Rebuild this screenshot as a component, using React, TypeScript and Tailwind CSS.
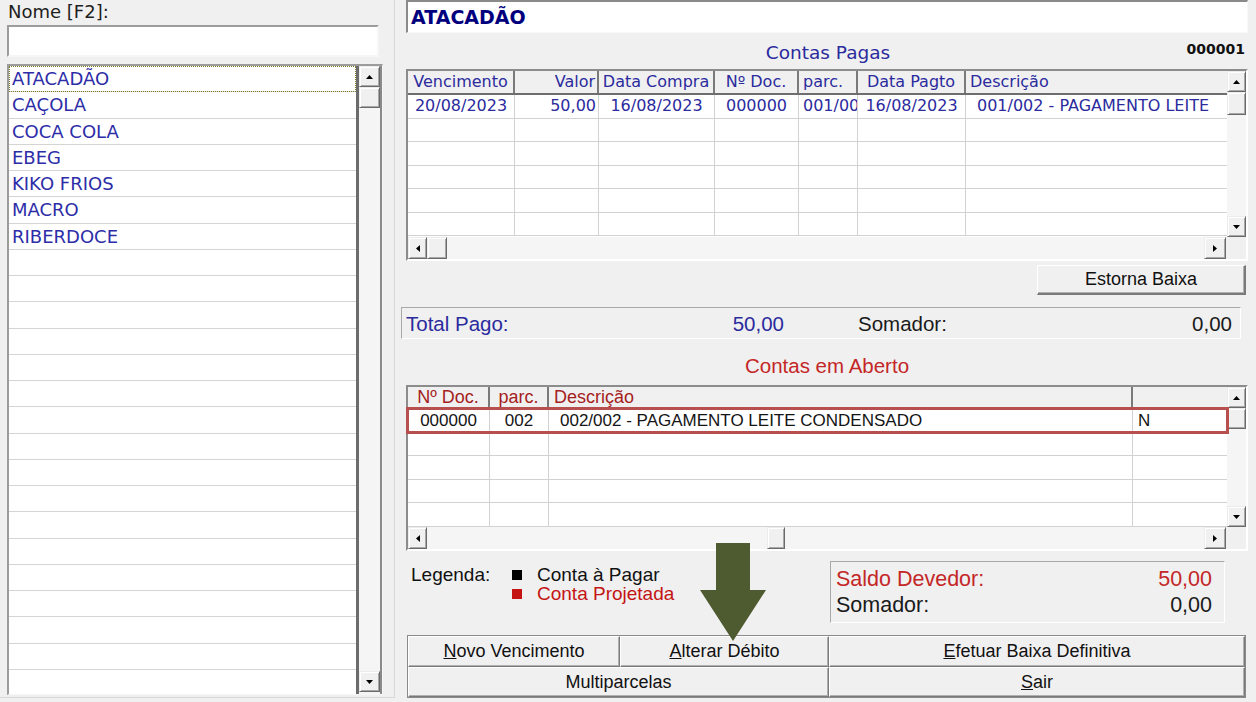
import React from "react";

const DV = "font-['DejaVu_Sans',Verdana,sans-serif]";
const LS = "font-['Liberation_Sans',Arial,sans-serif]";

function Tri({ dir }: { dir: "up" | "down" | "left" | "right" }) {
  const vert = dir === "up" || dir === "down";
  const d =
    dir === "up"
      ? "M0 4 L3.5 0 L7 4 Z"
      : dir === "down"
      ? "M0 0 L7 0 L3.5 4 Z"
      : dir === "left"
      ? "M4 0 L4 7 L0 3.5 Z"
      : "M0 0 L0 7 L4 3.5 Z";
  return (
    <svg width={vert ? 7 : 4} height={vert ? 4 : 7} viewBox={vert ? "0 0 7 4" : "0 0 4 7"}>
      <path d={d} fill="#000" />
    </svg>
  );
}

function SBtn({ className = "", children }: { className?: string; children?: React.ReactNode }) {
  return (
    <div
      className={`flex shrink-0 items-center justify-center bg-[#f0f0f0] border border-t-[#ececec] border-l-[#ececec] border-r-[#6a6a6a] border-b-[#6a6a6a] shadow-[inset_1px_1px_0_#ffffff,inset_-1px_-1px_0_#a8a8a8] ${className}`}
    >
      {children}
    </div>
  );
}

function VScroll({ thumbH, className = "" }: { thumbH: string; className?: string }) {
  return (
    <div className={`flex flex-col shrink-0 bg-[#f4f4f4] ${className}`}>
      <SBtn className="h-[21px] w-full">
        <Tri dir="up" />
      </SBtn>
      <SBtn className={`${thumbH} w-full`} />
      <div className="flex-1 bg-[#f5f5f5]" />
      <SBtn className="h-[21px] w-full">
        <Tri dir="down" />
      </SBtn>
    </div>
  );
}

function HScroll({ pre, thumbW }: { pre: string; thumbW: string }) {
  return (
    <div className="flex h-[22px] shrink-0 bg-[#f5f5f5]">
      <SBtn className="w-[19px] h-full">
        <Tri dir="left" />
      </SBtn>
      <div className={`${pre} shrink-0`} />
      <SBtn className={`${thumbW} h-full`} />
      <div className="flex-1" />
      <SBtn className="w-[22px] h-full">
        <Tri dir="right" />
      </SBtn>
      <div className="w-[20px] shrink-0 bg-[#f0f0f0]" />
    </div>
  );
}

const t1cols = ["w-[107px]", "w-[84px]", "w-[116px]", "w-[84px]", "w-[59px]", "w-[108px]", "flex-1"];

function Table1() {
  const heads: [string, string][] = [
    ["Vencimento", "justify-center"],
    ["Valor", "justify-end pr-[2px]"],
    ["Data Compra", "justify-center"],
    ["Nº Doc.", "justify-center"],
    ["parc.", "justify-start pl-[4px]"],
    ["Data Pagto", "justify-center"],
    ["Descrição", "justify-start pl-[4px]"],
  ];
  const row1: [string, string][] = [
    ["20/08/2023", "justify-center"],
    ["50,00", "justify-end pr-[2px]"],
    ["16/08/2023", "justify-center"],
    ["000000", "justify-center"],
    ["001/002", "justify-start pl-[4px]"],
    ["16/08/2023", "justify-center"],
    ["001/002 - PAGAMENTO LEITE", "justify-start pl-[11px]"],
  ];
  return (
    <div className="h-[192px] shrink-0 flex flex-col border-2 border-t-[#8c8c8c] border-l-[#8c8c8c] border-r-white border-b-white">
      <div className="flex flex-1 min-h-0">
        <div className={`flex-1 flex flex-col bg-white overflow-hidden ${DV}`}>
          <div className="flex h-[24px] shrink-0 bg-[#f0f0f0] border-b-2 border-[#6e6e6e] text-[16px] text-[#2b2b9e]">
            {heads.map(([t, a], i) => (
              <div
                key={i}
                className={`${t1cols[i]} shrink-0 flex items-center whitespace-nowrap overflow-hidden ${a} ${
                  i < 6 ? "border-r-2 border-[#7a7a7a]" : ""
                }`}
              >
                {t}
              </div>
            ))}
          </div>
          {[0, 1, 2, 3, 4, 5].map((r) => (
            <div key={r} className="flex h-[23.5px] shrink-0 border-b border-[#d2d2d2] text-[16px] text-[#2b2b9e]">
              {t1cols.map((c, i) => (
                <div
                  key={i}
                  className={`${c} shrink-0 flex items-center whitespace-nowrap overflow-hidden ${
                    r === 0 ? row1[i][1] : ""
                  } ${i < 6 ? "border-r border-[#d2d2d2]" : ""}`}
                >
                  {r === 0 ? row1[i][0] : ""}
                </div>
              ))}
            </div>
          ))}
        </div>
        <VScroll thumbH="h-[23px]" className="w-[19px]" />
      </div>
      <HScroll pre="w-0" thumbW="w-[20px]" />
    </div>
  );
}

const t2cols = ["w-[82px]", "w-[59px]", "w-[584px]", "flex-1"];

function Table2() {
  const heads: [string, string][] = [
    ["Nº Doc.", "justify-center"],
    ["parc.", "justify-center"],
    ["Descrição", "justify-start pl-[5px]"],
    ["", ""],
  ];
  const row1: [string, string][] = [
    ["000000", "justify-center"],
    ["002", "justify-center"],
    ["002/002 - PAGAMENTO LEITE CONDENSADO", "justify-start pl-[11px]"],
    ["N", "justify-start pl-[5px]"],
  ];
  return (
    <div className="relative h-[166px] shrink-0 flex flex-col border-2 border-t-[#8c8c8c] border-l-[#8c8c8c] border-r-white border-b-white">
      <div className="flex flex-1 min-h-0">
        <div className={`flex-1 flex flex-col bg-white overflow-hidden ${LS}`}>
          <div className="flex h-[22px] shrink-0 bg-[#f0f0f0] border-b-2 border-[#6e6e6e] text-[18px] text-[#a51d1d]">
            {heads.map(([t, a], i) => (
              <div
                key={i}
                className={`${t2cols[i]} shrink-0 flex items-center whitespace-nowrap overflow-hidden ${a} ${
                  i < 3 ? "border-r-2 border-[#7a7a7a]" : ""
                }`}
              >
                {t}
              </div>
            ))}
          </div>
          {[0, 1, 2, 3, 4].map((r) => (
            <div key={r} className="flex h-[23.6px] shrink-0 border-b border-[#d2d2d2] text-[17px] text-[#141414]">
              {t2cols.map((c, i) => (
                <div
                  key={i}
                  className={`${c} shrink-0 flex items-center whitespace-nowrap overflow-hidden ${
                    r === 0 ? row1[i][1] : ""
                  } ${i < 3 ? "border-r border-[#d2d2d2]" : ""}`}
                >
                  {r === 0 ? row1[i][0] : ""}
                </div>
              ))}
            </div>
          ))}
        </div>
        <VScroll thumbH="h-[21px]" className="w-[19px]" />
      </div>
      <HScroll pre="w-[340px]" thumbW="w-[18px]" />
      <div className="absolute left-[-2px] top-[20px] w-[823px] h-[27px] border-[3px] border-[#b84f4f]" />
    </div>
  );
}

function RaisedBtn({ className = "", children }: { className?: string; children?: React.ReactNode }) {
  return (
    <div
      className={`flex items-center justify-center bg-[#f0f0f0] border border-t-white border-l-white border-r-[#7a7a7a] border-b-[#7a7a7a] shadow-[inset_-1px_-1px_0_#b0b0b0] text-[18px] text-[#111] ${LS} ${className}`}
    >
      {children}
    </div>
  );
}

function LeftPanel() {
  const names = ["ATACADÃO", "CAÇOLA", "COCA COLA", "EBEG", "KIKO FRIOS", "MACRO", "RIBERDOCE"];
  const rows = Array.from({ length: 24 }, (_, i) => names[i] ?? "");
  return (
    <div className="w-[400px] shrink-0 h-full">
      <div className="w-[395px] h-[698px] border-r border-b border-[#d8d8d8] pl-[7px] pt-[1px] flex flex-col">
        <div className={`h-[24px] pl-[1px] text-[18px] leading-[22px] text-[#1e1e1e] ${DV}`}>Nome [F2]:</div>
        <div className="w-[372px] h-[32px] bg-white border-2 border-t-[#9c9c9c] border-l-[#9c9c9c] border-r-[#f6f6f6] border-b-[#f6f6f6]" />
        <div className="mt-[7px] w-[376px] h-[631px] flex border-t-2 border-l-2 border-t-[#9c9c9c] border-l-[#9c9c9c] border-r border-b border-r-[#f6f6f6] border-b-[#f6f6f6]">
          <div className={`flex-1 bg-white flex flex-col overflow-hidden ${DV}`}>
            {rows.map((n, i) => (
              <div
                key={i}
                className={`h-[26.25px] shrink-0 border-b border-[#d4d4d4] flex items-center pl-[3px] text-[18px] text-[#2d2da8] ${
                  i === 0 ? "outline-1 outline-dotted outline-[#7f7f2a] -outline-offset-1" : ""
                }`}
              >
                {n}
              </div>
            ))}
          </div>
          <div className="w-[26px] shrink-0 flex border-l-[3px] border-r-2 border-l-[#6c6c6c] border-r-[#8a8a8a] bg-[#f5f5f5] pb-[2px]">
            <VScroll thumbH="h-[21px]" className="w-full" />
          </div>
        </div>
      </div>
    </div>
  );
}

function RightPanel() {
  return (
    <div className="w-[856px] shrink-0 h-full flex flex-col pl-[6px] pr-[8px]">
      <div className="h-[33px] shrink-0 bg-white border-t-2 border-l-2 border-t-[#8a8a8a] border-l-[#8a8a8a] border-r border-b border-r-[#f8f8f8] border-b-[#f8f8f8] flex items-center pl-[3px]">
        <span className={`${DV} font-bold text-[19px] text-[#00007e]`}>ATACADÃO</span>
      </div>
      <div className="h-[36px] shrink-0 grid grid-cols-[1fr_auto_1fr] items-center">
        <div />
        <div className={`${DV} text-[18.5px] text-[#2b2b9e] pt-[3px] pl-[2px]`}>Contas Pagas</div>
        <div className={`${DV} font-bold text-[14px] text-[#111] justify-self-end pr-[3px] pb-[4px]`}>000001</div>
      </div>
      <Table1 />
      <div className="flex justify-end mt-[4px] pr-[2px]">
        <RaisedBtn className="w-[209px] h-[30px] border-r-2 border-b-2">Estorna Baixa</RaisedBtn>
      </div>
      <div
        className={`mt-[12px] -ml-[5px] w-[840px] h-[32px] shrink-0 flex items-center pl-[4px] pr-[8px] pt-[3px] border border-t-[#a8a8a8] border-l-[#a8a8a8] border-r-white border-b-white text-[20.5px] ${LS}`}
      >
        <div className="w-[378px] flex justify-between text-[#2b2b9e]">
          <span>Total Pago:</span>
          <span>50,00</span>
        </div>
        <span className="ml-[74px] text-[#1a1a1a]">Somador:</span>
        <span className="ml-auto text-[#1a1a1a]">0,00</span>
      </div>
      <div className={`h-[46px] shrink-0 flex items-center justify-center pt-[8px] text-[20.5px] text-[#c42727] ${LS}`}>
        Contas em Aberto
      </div>
      <Table2 />
      <div className="h-[84px] shrink-0 flex">
        <div className={`w-[424px] shrink-0 pl-[5px] pt-[14px] text-[19px] leading-[19px] ${LS}`}>
          <div className="flex items-center text-[#111]">
            <span className="w-[101px]">Legenda:</span>
            <span className="w-[10px] h-[10px] bg-black" />
            <span className="ml-[15px]">Conta à Pagar</span>
          </div>
          <div className="flex items-center text-[#c41414] pl-[101px]">
            <span className="w-[10px] h-[10px] bg-[#c41414]" />
            <span className="ml-[15px]">Conta Projetada</span>
          </div>
        </div>
        <div
          className={`mt-[10px] w-[395px] h-[62px] border border-t-[#a8a8a8] border-l-[#a8a8a8] border-r-white border-b-white pl-[5px] pr-[12px] pt-[4px] text-[21.5px] leading-[26px] ${LS}`}
        >
          <div className="flex justify-between text-[#c42727]">
            <span>Saldo Devedor:</span>
            <span>50,00</span>
          </div>
          <div className="flex justify-between text-[#1a1a1a]">
            <span>Somador:</span>
            <span>0,00</span>
          </div>
        </div>
      </div>
      <div className="ml-[1px] w-[839px] h-[63px] shrink-0 flex flex-col border border-[#8a8a8a] bg-[#f0f0f0]">
        <div className="flex h-[31px]">
          <RaisedBtn className="w-[212px] h-full">
            <span>
              <u>N</u>ovo Vencimento
            </span>
          </RaisedBtn>
          <RaisedBtn className="w-[209px] h-full">
            <span>
              <u>A</u>lterar Débito
            </span>
          </RaisedBtn>
          <RaisedBtn className="flex-1 h-full">
            <span>
              <u>E</u>fetuar Baixa Definitiva
            </span>
          </RaisedBtn>
        </div>
        <div className="flex flex-1">
          <RaisedBtn className="w-[421px] h-full">Multiparcelas</RaisedBtn>
          <RaisedBtn className="flex-1 h-full">
            <span>
              <u>S</u>air
            </span>
          </RaisedBtn>
        </div>
      </div>
    </div>
  );
}

export default function App() {
  return (
    <div className="relative flex w-[1256px] h-[702px] overflow-hidden bg-[#f0f0f0]">
      <LeftPanel />
      <RightPanel />
      <svg className="absolute left-[700px] top-[543px]" width="67" height="99" viewBox="0 0 67 99">
        <path d="M16 0 H50 V47 H66 L33 98 L0 47 H16 Z" fill="#4e5a30" />
      </svg>
    </div>
  );
}
